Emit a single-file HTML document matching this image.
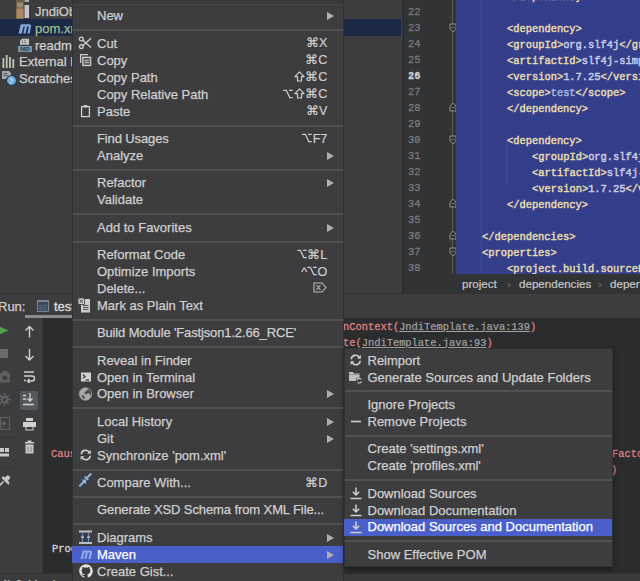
<!DOCTYPE html>
<html><head><meta charset="utf-8"><style>
*{margin:0;padding:0;box-sizing:border-box}
html,body{width:640px;height:581px;overflow:hidden;background:#3d3d3f;font-family:"Liberation Sans",sans-serif}
.abs{position:absolute}
#proj{left:0;top:0;width:403px;height:294px;background:#3d3d3f;border-right:1px solid #333335}
#projsel{left:0;top:19px;width:401px;height:16.5px;background:#1c2a48}
.tr{position:absolute;font-size:13px;color:#cfcfcf;-webkit-text-stroke:0.25px currentColor;white-space:nowrap;line-height:17px;height:17px}
#gutter{left:403px;top:0;width:53px;height:294px;background:#313335;border-left:1px solid #2b2b2b}
.ln{position:absolute;left:4px;width:14px;font:10.4px "Liberation Mono",monospace;color:#7a7a7a;line-height:16px;height:16px;-webkit-text-stroke:0.3px currentColor}
.ln.cur{color:#d0d0d0;font-weight:bold}
#foldline{left:452px;top:0;width:1px;height:274px;background:#5a5a50}
.fold{position:absolute;left:449px;width:7px;height:8px;border:1px solid #8a8a80;background:#313335}
#code{left:456px;top:0;width:184px;height:274px;background:#343e8b;overflow:hidden}
.guide{position:absolute;width:1px;background:#3d4898}
.cl{position:absolute;white-space:pre;font:10.4px "Liberation Mono",monospace;line-height:16px;height:16px;-webkit-text-stroke:0.45px currentColor}
.t{color:#e6dcae} .v{color:#c9cde8} .b{color:#a4b8e8}
#bread{left:404px;top:274px;width:236px;height:19.5px;background:#323335}
.bc{position:absolute;top:0;font-size:11.6px;line-height:20px;color:#c8c8c8;white-space:nowrap;-webkit-text-stroke:0.2px currentColor}
#runbar{left:0;top:293px;width:640px;height:25px;background:#3d3d3f;border-top:1px solid #343436}
#console{left:43px;top:318px;width:597px;height:256px;background:#2b2c2e}
#col1{left:0;top:318px;width:17.5px;height:256px;background:#3d3d3f;border-right:1px solid #333537}
#col2{left:17px;top:318px;width:26px;height:256px;background:#3d3d3f;border-right:1px solid #333537}
#status{left:0;top:573px;width:640px;height:8px;background:#3b3b3d;border-top:1px solid #323232;overflow:hidden}
.con{position:absolute;white-space:pre;font:10.4px "Liberation Mono",monospace;line-height:16px}
.red{color:#dd8080;-webkit-text-stroke:0.3px #dd8080} .lnk{color:#a4a4a4;text-decoration:underline;-webkit-text-stroke:0.2px currentColor}
#menu{left:72px;top:0;width:272px;height:581px;background:#3d3d3f;border-left:1px solid #2f3133;border-right:1px solid #2f3133}
#menutop{left:73px;top:0;width:271px;height:4px;background:#343537}
#sub{left:344px;top:348px;width:269px;height:219px;background:#3d3d3f;box-shadow:0 3px 6px rgba(0,0,0,.35);border:1px solid #2f3133}
.it{position:absolute;left:0;right:0;height:17px;line-height:17px;font-size:13px;color:#cfcfcf;white-space:nowrap;-webkit-text-stroke:0.25px #cfcfcf}
.it.hl{color:#ffffff;-webkit-text-stroke:0.25px #fff}
.hlbg{position:absolute;left:-1px;right:0} .hlbg{background:#4a5fca}
.tx{position:absolute;top:0}
.sc{position:absolute;top:0.7px;font-size:12.5px;color:#cfcfcf;-webkit-text-stroke:0.2px currentColor}
.ic{position:absolute;top:0.5px;height:16px;width:16px} .ic svg{display:block}
.ar{position:absolute;top:5px;width:0;height:0;border-top:4px solid transparent;border-bottom:4px solid transparent;border-left:7px solid #b0b0b0}
.sep{position:absolute;left:0;right:0;height:2px;background:#4f5153}
</style></head><body>
<div id="proj" class="abs"></div>
<div id="projsel" class="abs"></div>
<div class="tr" style="left:35px;top:3px">JndiObjectFactory.java</div>
<svg class="abs" style="left:15px;top:0px" width="16" height="20" viewBox="0 0 16 20"><path d="M1 0h8v19H1z" fill="#6a5a48"/><path d="M1.5 9c2-1 5-1 7 0v9.5h-7z" fill="#b08860"/><path d="M2 2c2 1 4 1 6 0v5c-2 1-4 1-6 0z" fill="#9a8a78"/><rect x="9.5" y="5" width="4.5" height="13" fill="#c4c8c8"/><rect x="9.5" y="0" width="4.5" height="2" fill="#a8acac"/></svg>
<div class="tr" style="left:35px;top:19.5px;color:#9fbf8f">pom.xml</div>
<svg class="abs" style="left:17px;top:19.5px" width="16" height="16" viewBox="0 0 16 16"><path d="M1.5 13.5L3.8 4.2h8.1c1.6 0 2.4 0.9 2.1 2.3L12.7 13.5h-2.3l1.4-6.2c0.1-0.5-0.1-0.8-0.6-0.8H10.1L8.5 13.5H6.3l1.6-7H6.5L4.8 13.5z" fill="#86a6dc"/></svg>
<div class="tr" style="left:35px;top:37px">readme.md</div>
<svg class="abs" style="left:18px;top:38px" width="15" height="15" viewBox="0 0 15 15"><path d="M4 0.8h7v6H2V3z" fill="#c4c4c4"/><path d="M4.5 2.5v3M7 2v3.5" stroke="#6a6c6e" stroke-width="0.9"/><rect x="0" y="8" width="14" height="6" fill="#7896a8"/><text x="7" y="13.2" font-family="Liberation Sans" font-weight="bold" font-size="6.2" fill="#29465a" text-anchor="middle">MD</text></svg>
<div class="tr" style="left:19px;top:53px">External Libraries</div>
<svg class="abs" style="left:2px;top:55px" width="14" height="13" viewBox="0 0 14 13"><g fill="#b9c8b0"><rect x="0.5" y="3" width="1.8" height="10"/><rect x="3.8" y="0" width="1.8" height="13"/><rect x="7.1" y="2" width="1.8" height="11"/><rect x="10.4" y="4" width="1.8" height="9"/></g></svg>
<div class="tr" style="left:19px;top:70px">Scratches and Consoles</div>
<svg class="abs" style="left:1px;top:70px" width="17" height="17" viewBox="0 0 17 17"><path d="M1 1h7l2 2v6H1z" fill="#a4a8ac"/><path d="M2.5 3.5h4M2.5 5.5h4" stroke="#55595d" stroke-width="1"/><circle cx="10.5" cy="10.5" r="5.6" fill="#243c56"/><circle cx="10.5" cy="10.5" r="4.4" fill="#70aee0"/><path d="M8.8 9.3c1.2-1.3 3.5-0.3 2.8 1.4-0.5 1.2-2.2 0.9-2.2 2.3" stroke="#e0eef8" stroke-width="1" fill="none"/></svg>

<div id="gutter" class="abs"><div class="ln" style="top:4.0px">22</div>
<div class="ln" style="top:20.0px">23</div>
<div class="ln" style="top:36.0px">24</div>
<div class="ln" style="top:52.0px">25</div>
<div class="ln cur" style="top:68.0px">26</div>
<div class="ln" style="top:84.0px">27</div>
<div class="ln" style="top:100.0px">28</div>
<div class="ln" style="top:116.0px">29</div>
<div class="ln" style="top:132.0px">30</div>
<div class="ln" style="top:148.0px">31</div>
<div class="ln" style="top:164.0px">32</div>
<div class="ln" style="top:180.0px">33</div>
<div class="ln" style="top:196.0px">34</div>
<div class="ln" style="top:212.0px">35</div>
<div class="ln" style="top:228.0px">36</div>
<div class="ln" style="top:244.0px">37</div>
<div class="ln" style="top:260.0px">38</div></div>
<div id="foldline" class="abs"></div>
<svg class="abs" style="left:448.5px;top:23px" width="8" height="10" viewBox="0 0 8 10"><path d="M1 1h6v5l-3 3l-3-3z" fill="#313335" stroke="#8c8c80" stroke-width="1"/><path d="M2.5 4.5h3" stroke="#8c8c80" stroke-width="0.8"/></svg><svg class="abs" style="left:448.5px;top:103px" width="8" height="10" viewBox="0 0 8 10"><path d="M1 8h6v-5l-3-3l-3 3z" fill="#313335" stroke="#8c8c80" stroke-width="1"/><path d="M2.5 4.5h3" stroke="#8c8c80" stroke-width="0.8"/></svg><svg class="abs" style="left:448.5px;top:135px" width="8" height="10" viewBox="0 0 8 10"><path d="M1 1h6v5l-3 3l-3-3z" fill="#313335" stroke="#8c8c80" stroke-width="1"/><path d="M2.5 4.5h3" stroke="#8c8c80" stroke-width="0.8"/></svg><svg class="abs" style="left:448.5px;top:199px" width="8" height="10" viewBox="0 0 8 10"><path d="M1 8h6v-5l-3-3l-3 3z" fill="#313335" stroke="#8c8c80" stroke-width="1"/><path d="M2.5 4.5h3" stroke="#8c8c80" stroke-width="0.8"/></svg><svg class="abs" style="left:448.5px;top:231px" width="8" height="10" viewBox="0 0 8 10"><path d="M1 8h6v-5l-3-3l-3 3z" fill="#313335" stroke="#8c8c80" stroke-width="1"/><path d="M2.5 4.5h3" stroke="#8c8c80" stroke-width="0.8"/></svg><svg class="abs" style="left:448.5px;top:247px" width="8" height="10" viewBox="0 0 8 10"><path d="M1 1h6v5l-3 3l-3-3z" fill="#313335" stroke="#8c8c80" stroke-width="1"/><path d="M2.5 4.5h3" stroke="#8c8c80" stroke-width="0.8"/></svg>
<div id="code" class="abs">
<div class="guide" style="left:25px;top:0;height:274px"></div>
<div class="guide" style="left:50px;top:140px;height:48px"></div>
<div class="cl" style="top:-11.5px;left:51px"><span class="t">&lt;/dependency&gt;</span></div>
<div class="cl" style="top:20.5px;left:51px"><span class="t">&lt;dependency&gt;</span></div>
<div class="cl" style="top:36.5px;left:51px"><span class="t">&lt;groupId&gt;</span><span class="v">org.slf4j</span><span class="t">&lt;/groupId&gt;</span></div>
<div class="cl" style="top:52.5px;left:51px"><span class="t">&lt;artifactId&gt;</span><span class="v">slf4j-simple</span><span class="t">&lt;/artifactId&gt;</span></div>
<div class="cl" style="top:68.5px;left:51px"><span class="t">&lt;version&gt;</span><span class="v">1.7.25</span><span class="t">&lt;/version&gt;</span></div>
<div class="cl" style="top:84.5px;left:51px"><span class="t">&lt;scope&gt;</span><span class="b">test</span><span class="t">&lt;/scope&gt;</span></div>
<div class="cl" style="top:100.5px;left:51px"><span class="t">&lt;/dependency&gt;</span></div>
<div class="cl" style="top:132.5px;left:51px"><span class="t">&lt;dependency&gt;</span></div>
<div class="cl" style="top:148.5px;left:76px"><span class="t">&lt;groupId&gt;</span><span class="v">org.slf4j</span><span class="t">&lt;/groupId&gt;</span></div>
<div class="cl" style="top:164.5px;left:76px"><span class="t">&lt;artifactId&gt;</span><span class="v">slf4j-simple</span><span class="t">&lt;/artifactId&gt;</span></div>
<div class="cl" style="top:180.5px;left:76px"><span class="t">&lt;version&gt;</span><span class="v">1.7.25</span><span class="t">&lt;/version&gt;</span></div>
<div class="cl" style="top:196.5px;left:51px"><span class="t">&lt;/dependency&gt;</span></div>
<div class="cl" style="top:228.5px;left:26px"><span class="t">&lt;/dependencies&gt;</span></div>
<div class="cl" style="top:244.5px;left:26px"><span class="t">&lt;properties&gt;</span></div>
<div class="cl" style="top:260.5px;left:51px"><span class="t">&lt;project.build.sourceEncoding&gt;</span><span class="v">UTF-8</span></div>
<div class="cl" style="top:276.5px;left:51px"><span class="t">&lt;project.reporting.outputEncoding&gt;</span></div>
</div>
<div id="bread" class="abs">
<span class="bc" style="left:58px">project</span><span class="bc" style="left:103px;color:#6a6a6a">›</span>
<span class="bc" style="left:115px">dependencies</span><span class="bc" style="left:194px;color:#6a6a6a">›</span>
<span class="bc" style="left:206px">dependency</span>
</div>

<div id="runbar" class="abs">
<span class="abs" style="left:-2px;top:5px;font-size:13px;color:#cfcfcf;-webkit-text-stroke:0.25px currentColor">Run:</span>
<span class="abs" style="left:37px;top:6px;width:12px;height:12px;border:1px solid #7d8288;border-top-width:2px;background:#3a4a5e"></span><span class="abs" style="left:39px;top:10px;width:8px;height:6px;background:repeating-linear-gradient(0deg,#56687c 0 1px,transparent 1px 2px)"></span>
<span class="abs" style="left:54px;top:5px;font-size:13px;color:#dedede;-webkit-text-stroke:0.3px currentColor">test</span>
<span class="abs" style="left:25px;top:21px;width:50px;height:3px;background:#8a8d90"></span>
</div>
<div id="col1" class="abs"></div>
<div id="col2" class="abs"></div>
<svg class="abs" style="left:0;top:318px" width="43" height="255" viewBox="0 0 43 255">
<path d="M-5 6.5l13.5 6-13.5 6z" fill="#4fa34f"/>
<rect x="0" y="31" width="8" height="9" fill="#6b6d6f"/>
<g fill="#5c5e60"><path d="M0 55h10v9.5H0z"/><path d="M2.5 53h5v2h-5z"/></g><circle cx="5" cy="59.8" r="2.3" fill="#3d3d3f"/>
<g stroke="#5c5e60" stroke-width="1.6"><path d="M4.5 75v13M-2 81.5h13M0 77l9 9M9 77l-9 9"/></g><circle cx="4.5" cy="81.5" r="3.8" fill="#5c5e60"/><circle cx="4.5" cy="81.5" r="1.6" fill="#3d3d3f"/>
<rect x="0.5" y="99.5" width="9" height="12" fill="none" stroke="#5c5e60" stroke-width="1.3"/><path d="M-1 105.5h6M3 103l2.5 2.5-2.5 2.5" stroke="#5c5e60" stroke-width="1.3" fill="none"/>
<rect x="0" y="119" width="16" height="1" fill="#333537"/>
<g fill="#c8c8c8"><rect x="0" y="130" width="4" height="4"/><rect x="5" y="130" width="4" height="4"/><rect x="0" y="135.5" width="9" height="3"/></g>
<rect x="0" y="149" width="16" height="1" fill="#333537"/>
<g transform="translate(-1 -1.5)"><path d="M0 169.5l4.5-4.5" stroke="#c4c4c4" stroke-width="1.6"/><path d="M2.5 161.5l7 7 1-2.5-1.5-1.5 2.5-3.5-2.5-2.5-3.5 2.5-1.5-1.5z" fill="#c4c4c4"/></g>
<g fill="none" stroke="#d0d0d0" stroke-width="1.4"><path d="M29.5 8.5v11M25.5 12.5l4-4 4 4"/><path d="M29.5 31v11M25.5 38l4 4 4-4"/></g>
<g fill="none" stroke="#d0d0d0" stroke-width="1.4"><path d="M24 54h10M24 58h8a2.5 2.5 0 0 1 0 5h-4M29.5 61l-2 2 2 2M24 62.5h2"/></g>
<rect x="20" y="73" width="18" height="19" rx="2" fill="#55585a"/>
<g fill="none" stroke="#d0d0d0" stroke-width="1.3"><path d="M23 86.5h11M23 77.5h3M23 81h3M30 75v8M27.5 80.5l2.5 2.5 2.5-2.5"/></g>
<g fill="#d0d0d0"><rect x="26" y="100" width="7" height="3"/><rect x="23" y="104" width="13" height="5"/><rect x="26" y="108" width="7" height="4" fill="none" stroke="#d0d0d0" stroke-width="1"/></g>
<g fill="#c8c8c8"><rect x="25" y="124" width="9" height="1.5"/><rect x="27.5" y="122.5" width="4" height="1.5"/><rect x="25.5" y="126.5" width="8" height="9"/></g>
<path d="M28 128.5v5.5M31 128.5v5.5" stroke="#77797b" stroke-width="0.8"/>
</svg>
<div id="console" class="abs">
<div class="con red" style="left:8px;top:128px">Caused by: java.lang.ClassNotFoundException</div>
<div class="con" style="left:9px;top:223px;color:#d0d0d0;-webkit-text-stroke:0.35px currentColor">Process finished with exit code 1</div>
</div>
<div class="con" style="left:343px;top:318.5px"><span class="red">nContext(</span><span class="lnk">JndiTemplate.java:139</span><span class="red">)</span></div>
<div class="con" style="left:343px;top:334.5px"><span class="red">te(</span><span class="lnk">JndiTemplate.java:93</span><span class="red">)</span></div>
<div class="con red" style="left:612px;top:446px">Facto</div>
<div class="con red" style="left:611px;top:462px">)</div>
<div id="status" class="abs"><span class="abs" style="left:2px;top:4px;font-size:12px;line-height:14px;color:#c0c0c0;white-space:nowrap;-webkit-text-stroke:0.2px currentColor">⇅ 6: Version Control</span><span class="abs" style="left:344px;top:4px;font-size:12px;line-height:14px;color:#c0c0c0;white-space:nowrap">ors</span></div>

<div id="menu" class="abs">
<div style="position:absolute;left:0;right:0;top:0;height:5px;background:#38393b;border-bottom:1px solid #444547"></div>
<div class="it" style="top:7.40px"><span class="tx" style="left:24px;letter-spacing:0px">New</span><span class="ar" style="left:254px"></span></div>
<div class="sep" style="top:29.40px"></div>
<div class="it" style="top:34.80px"><span class="ic" style="left:5px"><svg width="16" height="16" viewBox="0 0 16 16"><g fill="none" stroke="#cdcdcd" stroke-width="1.4"><circle cx="3.3" cy="4" r="1.9"/><circle cx="3.3" cy="11.6" r="1.9"/><path d="M4.9 5.2L13 12.5M4.9 10.4L13 3.2"/></g></svg></span><span class="tx" style="left:24px;letter-spacing:0px">Cut</span><span class="sc" style="right:15.699999999999989px">⌘X</span></div>
<div class="it" style="top:51.73px"><span class="ic" style="left:5px"><svg width="16" height="16" viewBox="0 0 16 16"><g fill="none" stroke="#cdcdcd" stroke-width="1.3"><path d="M2.6 11V2.6H10"/><rect x="4.8" y="5.3" width="7.8" height="8.2" fill="#5c5d5f"/></g><path d="M6.6 8.6h4.2M6.6 10.6h4.2" stroke="#cdcdcd" stroke-width="0.9"/></svg></span><span class="tx" style="left:24px;letter-spacing:0px">Copy</span><span class="sc" style="right:15.699999999999989px">⌘C</span></div>
<div class="it" style="top:68.66px"><span class="tx" style="left:24px;letter-spacing:0px">Copy Path</span><span class="sc" style="right:15.699999999999989px"><svg width="11" height="11" viewBox="0 0 11 11" style="vertical-align:-1px;margin-right:0.5px"><path d="M5.5 0.8L0.9 5.6h2.6v4.4h4v-4.4h2.6z" stroke="#cfcfcf" stroke-width="1.2" fill="none" stroke-linejoin="round"/></svg>⌘C</span></div>
<div class="it" style="top:85.59px"><span class="tx" style="left:24px;letter-spacing:0px">Copy Relative Path</span><span class="sc" style="right:15.699999999999989px"><svg width="10" height="10" viewBox="0 0 10 10" style="vertical-align:-0.5px;margin-right:0.5px"><path d="M0.3 1.3h3l3.6 7.4h2.8M6 1.3h3.7" stroke="#cfcfcf" stroke-width="1.3" fill="none"/></svg><svg width="11" height="11" viewBox="0 0 11 11" style="vertical-align:-1px;margin-right:0.5px"><path d="M5.5 0.8L0.9 5.6h2.6v4.4h4v-4.4h2.6z" stroke="#cfcfcf" stroke-width="1.2" fill="none" stroke-linejoin="round"/></svg>⌘C</span></div>
<div class="it" style="top:102.52px"><span class="ic" style="left:5px"><svg width="16" height="16" viewBox="0 0 16 16"><g fill="none" stroke="#cdcdcd" stroke-width="1.3"><rect x="3.6" y="3.6" width="7.8" height="10"/></g><rect x="5.5" y="2" width="4" height="2.6" rx="1" fill="#cdcdcd"/></svg></span><span class="tx" style="left:24px;letter-spacing:0px">Paste</span><span class="sc" style="right:15.699999999999989px">⌘V</span></div>
<div class="sep" style="top:124.52px"></div>
<div class="it" style="top:129.92px"><span class="tx" style="left:24px;letter-spacing:-0.12px">Find Usages</span><span class="sc" style="right:15.699999999999989px"><svg width="10" height="10" viewBox="0 0 10 10" style="vertical-align:-0.5px;margin-right:0.5px"><path d="M0.3 1.3h3l3.6 7.4h2.8M6 1.3h3.7" stroke="#cfcfcf" stroke-width="1.3" fill="none"/></svg>F7</span></div>
<div class="it" style="top:146.85px"><span class="tx" style="left:24px;letter-spacing:0px">Analyze</span><span class="ar" style="left:254px"></span></div>
<div class="sep" style="top:168.85px"></div>
<div class="it" style="top:174.25px"><span class="tx" style="left:24px;letter-spacing:0px">Refactor</span><span class="ar" style="left:254px"></span></div>
<div class="it" style="top:191.18px"><span class="tx" style="left:24px;letter-spacing:0px">Validate</span></div>
<div class="sep" style="top:213.18px"></div>
<div class="it" style="top:218.58px"><span class="tx" style="left:24px;letter-spacing:0px">Add to Favorites</span><span class="ar" style="left:254px"></span></div>
<div class="sep" style="top:240.58px"></div>
<div class="it" style="top:245.98px"><span class="tx" style="left:24px;letter-spacing:0px">Reformat Code</span><span class="sc" style="right:15.699999999999989px"><svg width="10" height="10" viewBox="0 0 10 10" style="vertical-align:-0.5px;margin-right:0.5px"><path d="M0.3 1.3h3l3.6 7.4h2.8M6 1.3h3.7" stroke="#cfcfcf" stroke-width="1.3" fill="none"/></svg>⌘L</span></div>
<div class="it" style="top:262.91px"><span class="tx" style="left:24px;letter-spacing:0px">Optimize Imports</span><span class="sc" style="right:15.699999999999989px">^<svg width="10" height="10" viewBox="0 0 10 10" style="vertical-align:-0.5px;margin-right:0.5px"><path d="M0.3 1.3h3l3.6 7.4h2.8M6 1.3h3.7" stroke="#cfcfcf" stroke-width="1.3" fill="none"/></svg>O</span></div>
<div class="it" style="top:279.84px"><span class="tx" style="left:24px;letter-spacing:0px">Delete...</span><span class="sc" style="right:15.699999999999989px"><svg width="14" height="11" viewBox="0 0 14 11"><path d="M1 1h8l4 4.5-4 4.5H1z" fill="none" stroke="#bbb" stroke-width="1.1"/><path d="M3.5 3l4 5M7.5 3l-4 5" stroke="#bbb" stroke-width="1.1"/></svg></span></div>
<div class="it" style="top:296.77px"><span class="ic" style="left:5px"><svg width="16" height="16" viewBox="0 0 16 16"><rect x="3" y="2" width="9" height="13.5" fill="#cdcdcd"/><rect x="0" y="1" width="6.5" height="6.5" fill="#cdcdcd" stroke="#3c3e40" stroke-width="0.8"/><path d="M1.5 2.5l3.5 3.5M5 2.5L1.5 6" stroke="#4a4a4a" stroke-width="1"/><path d="M5 8.5h5.5M5 10.5h5.5M5 12.5h5.5" stroke="#55575a" stroke-width="1"/></svg></span><span class="tx" style="left:24px;letter-spacing:0px">Mark as Plain Text</span></div>
<div class="sep" style="top:318.77px"></div>
<div class="it" style="top:324.17px"><span class="tx" style="left:24px;letter-spacing:-0.14px">Build Module 'Fastjson1.2.66_RCE'</span></div>
<div class="sep" style="top:346.17px"></div>
<div class="it" style="top:351.57px"><span class="tx" style="left:24px;letter-spacing:0px">Reveal in Finder</span></div>
<div class="it" style="top:368.50px"><span class="ic" style="left:5px"><svg width="16" height="16" viewBox="0 0 16 16"><rect x="3" y="3.5" width="10" height="9" fill="#d2d2d2"/><path d="M4.8 5.6l2.4 1.8-2.4 1.8M7.5 10.8h3.5" stroke="#3c3e40" stroke-width="1.2" fill="none"/></svg></span><span class="tx" style="left:24px;letter-spacing:0px">Open in Terminal</span></div>
<div class="it" style="top:385.43px"><span class="ic" style="left:5px"><svg width="16" height="16" viewBox="0 0 16 16"><circle cx="7.5" cy="8" r="6.4" fill="#a9a9a9" stroke="#8a8a8a" stroke-width="0.6"/><path d="M9.5 3.5L6 7.2l1.8 1.2 3.2-1.5 1.5 2.8 0.8-3.5-2-3.3zM3 9.5l2.5 3.5 1.5-1-1.2-2.5z" fill="#4b4c4e"/></svg></span><span class="tx" style="left:24px;letter-spacing:0px">Open in Browser</span><span class="ar" style="left:254px"></span></div>
<div class="sep" style="top:407.43px"></div>
<div class="it" style="top:412.83px"><span class="tx" style="left:24px;letter-spacing:0px">Local History</span><span class="ar" style="left:254px"></span></div>
<div class="it" style="top:429.76px"><span class="tx" style="left:24px;letter-spacing:0px">Git</span><span class="ar" style="left:254px"></span></div>
<div class="it" style="top:446.69px"><span class="ic" style="left:5px"><svg width="16" height="16" viewBox="0 0 16 16"><g fill="none" stroke="#d0d0d0" stroke-width="1.6"><path d="M3.3 7.2A4.3 4.3 0 0 1 11.2 5.2"/><path d="M12.2 8.8A4.3 4.3 0 0 1 4.3 10.8"/></g><path d="M12.9 3v3.8H9.1z" fill="#d0d0d0"/><path d="M2.6 13V9.2h3.8z" fill="#d0d0d0"/></svg></span><span class="tx" style="left:24px;letter-spacing:0px">Synchronize 'pom.xml'</span></div>
<div class="sep" style="top:468.69px"></div>
<div class="it" style="top:474.09px"><span class="ic" style="left:5px"><svg width="16" height="16" viewBox="0 0 16 16" style="overflow:visible"><g stroke="#2a3b50" stroke-width="0.7" fill="#9cbad6"><path d="M6.2 5.2V-0.2L8.2 1.8 12.6 -2.6 14.4 -0.8 10 3.6 12 5.6H6.6z"/><path d="M8.4 4.6V10l-2-2-4.4 4.4-1.8-1.8 4.4-4.4-2-2h5.4z"/></g></svg></span><span class="tx" style="left:24px;letter-spacing:0px">Compare With...</span><span class="sc" style="right:15.699999999999989px">⌘D</span></div>
<div class="sep" style="top:496.09px"></div>
<div class="it" style="top:501.49px"><span class="tx" style="left:24px;letter-spacing:-0.1px">Generate XSD Schema from XML File...</span></div>
<div class="sep" style="top:523.49px"></div>
<div class="it" style="top:528.89px"><span class="ic" style="left:5px"><svg width="16" height="16" viewBox="0 0 16 16"><rect x="1" y="1.5" width="13" height="2" fill="#c0c0c0"/><rect x="1" y="13" width="13" height="2" fill="#c0c0c0"/><path d="M4.5 3.5v9.5M10.5 3.5v9.5" stroke="#5f8fc0" stroke-width="1.3"/><path d="M3 8.2h3M9 8.2h3" stroke="#d0d0d0" stroke-width="1.3"/></svg></span><span class="tx" style="left:24px;letter-spacing:0px">Diagrams</span><span class="ar" style="left:254px"></span></div>
<div class="it hl" style="top:545.82px"><div class="hlbg" style="top:0.2px;height:17px"></div><span class="ic" style="left:5px"><svg width="16" height="16" viewBox="0 0 16 16"><path d="M2.5 13L4.6 4.5h7.4c1.6 0 2.3 0.9 2 2.2L12.5 13h-2.2l1.4-5.8c0.1-0.5-0.1-0.8-0.6-0.8H10L8.4 13H6.3l1.5-6.6H6.5L4.8 13z" fill="#8fa8e8"/></svg></span><span class="tx" style="left:24px;letter-spacing:0px">Maven</span><span class="ar" style="left:254px"></span></div>
<div class="it" style="top:562.75px"><span class="ic" style="left:5px"><svg width="16" height="16" viewBox="0 0 16 16"><g transform="translate(1.2 1.2) scale(0.85)"><path fill="#e4e4e4" d="M8 0C3.58 0 0 3.58 0 8c0 3.54 2.29 6.53 5.47 7.59.4.07.55-.17.55-.38 0-.19-.01-.82-.01-1.49-2.01.37-2.53-.49-2.69-.94-.09-.23-.48-.94-.82-1.130-.28-.15-.68-.52-.01-.53.63-.01 1.08.58 1.23.82.72 1.21 1.870.87 2.33.66.07-.52.28-.87.51-1.07-1.78-.2-3.64-.89-3.64-3.95 0-.87.31-1.59.82-2.15-.08-.2-.36-1.02.08-2.12 0 0 .67-.21 2.2.82.64-.18 1.32-.27 2-.27.68 0 1.36.09 2 .27 1.53-1.04 2.2-.82 2.2-.82.44 1.1.16 1.92.08 2.12.51.56.82 1.270.82 2.15 0 3.07-1.87 3.75-3.65 3.95.29.25.54.73.54 1.48 0 1.07-.01 1.93-.01 2.2 0 .21.15.46.55.38A8.013 8.013 0 0016 8c0-4.42-3.58-8-8-8z"/></g></svg></span><span class="tx" style="left:24px;letter-spacing:0px">Create Gist...</span></div>
</div>
<div id="sub" class="abs">
<div class="it" style="top:2.80px"><span class="ic" style="left:3px"><svg width="16" height="16" viewBox="0 0 16 16"><g fill="none" stroke="#d0d0d0" stroke-width="1.6"><path d="M3.3 7.2A4.3 4.3 0 0 1 11.2 5.2"/><path d="M12.2 8.8A4.3 4.3 0 0 1 4.3 10.8"/></g><path d="M12.9 3v3.8H9.1z" fill="#d0d0d0"/><path d="M2.6 13V9.2h3.8z" fill="#d0d0d0"/></svg></span><span class="tx" style="left:22.5px;letter-spacing:0px">Reimport</span></div>
<div class="it" style="top:19.69px"><span class="ic" style="left:3px"><svg width="16" height="16" viewBox="0 0 16 16"><path d="M1 3h4l1.2 1.5H11.5V12H1z" fill="#bdbdbd"/><path d="M1 5.5h10.5" stroke="#8a8a8a" stroke-width="0.8"/><circle cx="11.3" cy="11.8" r="3.4" fill="#3c3e40"/><g fill="none" stroke="#d0d0d0" stroke-width="1.1"><path d="M9.2 11.4a2.1 2.1 0 0 1 3.8-1.1"/><path d="M13.4 12.2a2.1 2.1 0 0 1-3.8 1.1"/></g></svg></span><span class="tx" style="left:22.5px;letter-spacing:0px">Generate Sources and Update Folders</span></div>
<div class="sep" style="top:41.49px"></div>
<div class="it" style="top:47.07px"><span class="tx" style="left:22.5px;letter-spacing:0px">Ignore Projects</span></div>
<div class="it" style="top:63.96px"><span class="ic" style="left:3px"><svg width="16" height="16" viewBox="0 0 16 16"><path d="M3 8.5h10" stroke="#d0d0d0" stroke-width="1.6"/></svg></span><span class="tx" style="left:22.5px;letter-spacing:0px">Remove Projects</span></div>
<div class="sep" style="top:85.76px"></div>
<div class="it" style="top:91.34px"><span class="tx" style="left:22.5px;letter-spacing:0px">Create 'settings.xml'</span></div>
<div class="it" style="top:108.23px"><span class="tx" style="left:22.5px;letter-spacing:0px">Create 'profiles.xml'</span></div>
<div class="sep" style="top:130.03px"></div>
<div class="it" style="top:135.61px"><span class="ic" style="left:3px"><svg width="16" height="16" viewBox="0 0 16 16"><g fill="none" stroke="#d0d0d0" stroke-width="1.5"><path d="M8 2.5v7.5M4.8 6.8L8 10l3.2-3.2M2.5 13.5h11"/></g></svg></span><span class="tx" style="left:22.5px;letter-spacing:0px">Download Sources</span></div>
<div class="it" style="top:152.50px"><span class="ic" style="left:3px"><svg width="16" height="16" viewBox="0 0 16 16"><g fill="none" stroke="#d0d0d0" stroke-width="1.5"><path d="M8 2.5v7.5M4.8 6.8L8 10l3.2-3.2M2.5 13.5h11"/></g></svg></span><span class="tx" style="left:22.5px;letter-spacing:0px">Download Documentation</span></div>
<div class="it hl" style="top:169.39px"><div class="hlbg" style="top:0.7px;height:16.9px"></div><span class="ic" style="left:3px"><svg width="16" height="16" viewBox="0 0 16 16"><g fill="none" stroke="#d0d0d0" stroke-width="1.5"><path d="M8 2.5v7.5M4.8 6.8L8 10l3.2-3.2M2.5 13.5h11"/></g></svg></span><span class="tx" style="left:22.5px;letter-spacing:0px">Download Sources and Documentation</span></div>
<div class="sep" style="top:191.19px"></div>
<div class="it" style="top:196.77px"><span class="tx" style="left:22.5px;letter-spacing:0px">Show Effective POM</span></div>
</div>
</body></html>
